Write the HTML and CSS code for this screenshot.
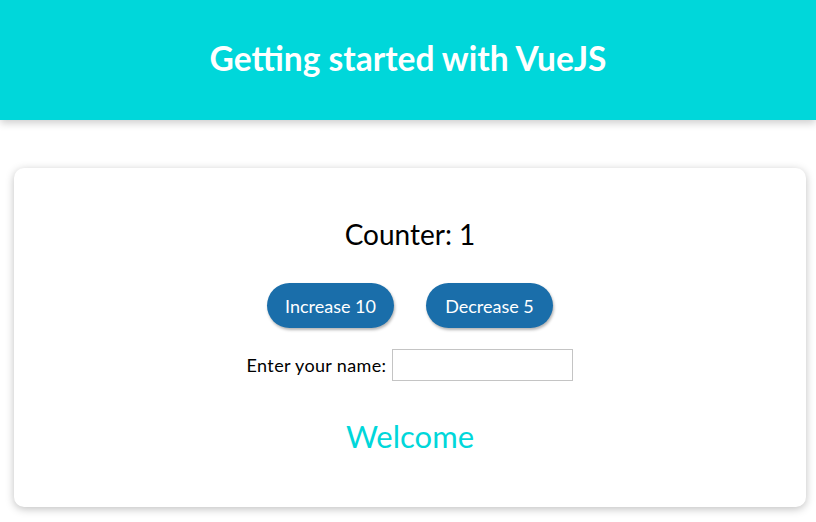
FILE: index.html
```html
<!DOCTYPE html>
<html>
<head>
<meta charset="utf-8">
<link rel="stylesheet" href="styles.css">
</head>
<body>
<header class="top">
  <h1 class="title">Getting started with VueJS</h1>
</header>
<main class="wrap">
  <section class="card">
    <h2 class="counter">Counter: 1</h2>
    <div class="buttons">
      <button class="btn">Increase 10</button>
      <button class="btn">Decrease 5</button>
    </div>
    <div class="field">
      <label class="label" for="name">Enter your name:</label>
      <input class="input" id="name" type="text">
    </div>
    <h2 class="welcome">Welcome</h2>
  </section>
</main>
</body>
</html>
```
FILE: styles.css
```css
* { box-sizing: border-box; }
html, body { margin: 0; padding: 0; background: #fff; }
body { font-family: "Lato", "Open Sans", sans-serif; color: #000; }
.top {
  height: 120px;
  background: #00d7da;
  display: flex;
  align-items: center;
  justify-content: center;
  box-shadow: 0 3px 8px rgba(0,0,0,0.2);
}
.title {
  margin: 0 0 4px;
  color: #fff;
  font-size: 33.5px;
  font-weight: 700;
}
.wrap { padding: 48px 10px 15px 14px; }
.card {
  height: 339px;
  border-radius: 10px;
  background: #fff;
  box-shadow: 0 2px 8px rgba(0,0,0,0.25);
  display: flex;
  flex-direction: column;
  align-items: center;
  padding-top: 46px;
}
.counter {
  margin: 0;
  font-size: 28px;
  font-weight: 400;
  line-height: 40px;
}
.buttons {
  display: flex;
  gap: 32px;
  margin-top: 29px;
}
.btn {
  width: 127px;
  height: 45px;
  border: none;
  border-radius: 23px;
  background: #1a6eaa;
  color: #fff;
  font-family: inherit;
  font-size: 18px;
  box-shadow: 1px 2px 3px rgba(0,0,0,0.3);
}
.field {
  display: flex;
  align-items: center;
  gap: 6px;
  margin-top: 21px;
}
.label { font-size: 18px; letter-spacing: 0.35px; }
.input {
  width: 181px;
  height: 32px;
  border: 1px solid #c4c4c4;
  font-size: 16px;
}
.welcome {
  margin: 35px 0 0;
  font-size: 31px;
  font-weight: 400;
  color: #00d7da;
  line-height: 40px;
}
```
